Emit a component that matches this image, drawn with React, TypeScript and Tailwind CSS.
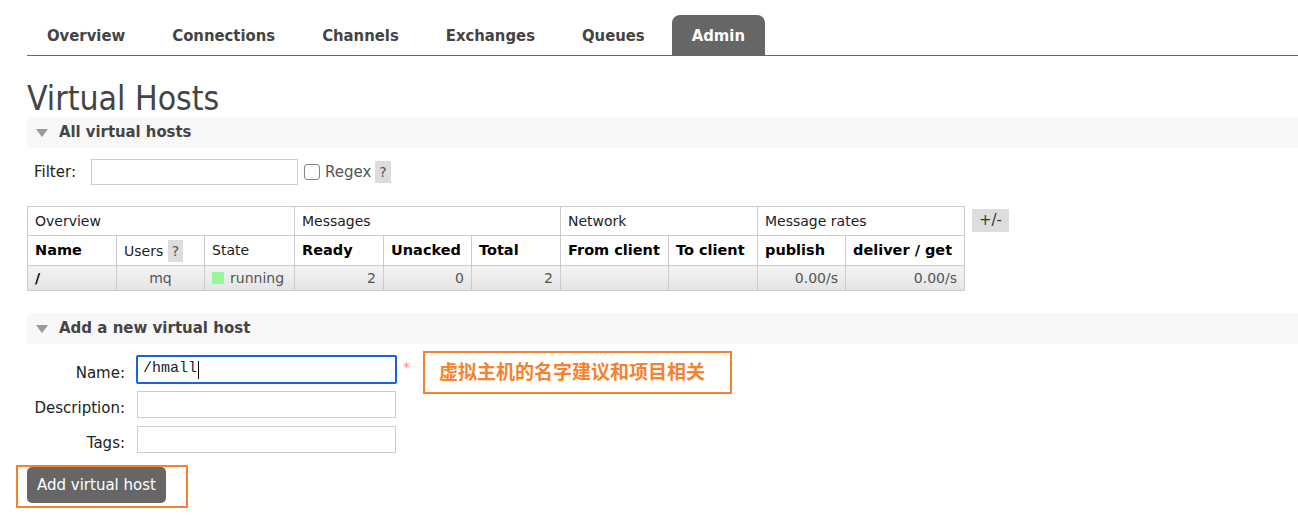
import React from "react";

const tabs = ["Overview", "Connections", "Channels", "Exchanges", "Queues", "Admin"];

const cond = { fontFamily: '"DejaVu Sans Condensed", "DejaVu Sans", sans-serif' };

function SectionHeader({ title, condensed }: { title: string; condensed?: boolean }) {
  return (
    <div className="flex h-[31px] items-center bg-[#f8f8f8] pl-[9px]">
      <svg width="12" height="8" viewBox="0 0 12 8" className="mr-[11px]">
        <path d="M0 0 L12 0 L6 8 Z" fill="#999" />
      </svg>
      {condensed ? (
        <span className="text-[16.5px] font-bold text-[#444]" style={cond}>
          {title}
        </span>
      ) : (
        <span className="text-[15px] font-bold text-[#444]">{title}</span>
      )}
    </div>
  );
}

function Help() {
  return <span className="inline-block bg-[#ddd] px-[4px] leading-[22px] text-[#555]">?</span>;
}

export default function App() {
  const th = "border border-[#ccc] px-[7px] text-left text-[14.5px] font-bold text-black";
  const td = "border border-[#ccc] px-[7px] text-right text-[#555]";
  const thn = "border border-[#ccc] px-[7px] text-left font-normal text-[#222]";
  return (
    <div
      className="min-h-screen bg-white pl-[27px] text-[14px] text-[#222]"
      style={{ fontFamily: '"DejaVu Sans", Verdana, sans-serif' }}
    >
      {/* tabs */}
      <div className="flex gap-[7px] border-b border-[#666] pt-[15px]">
        {tabs.map((t) => (
          <div
            key={t}
            className={`flex h-[40px] items-center rounded-t-[8px] px-[20px] pt-[3px] text-[16.5px] font-bold ${
              t === "Admin" ? "bg-[#666] text-white" : "text-[#444]"
            }`}
            style={cond}
          >
            {t}
          </div>
        ))}
      </div>

      <h1 className="mt-[25px] text-[33.5px] leading-[36px] text-[#444]" style={cond}>
        Virtual Hosts
      </h1>

      <SectionHeader title="All virtual hosts" condensed />

      {/* filter */}
      <div className="mt-[11px] flex items-center pl-[7px] text-[15px]">
        <span className="mr-[15px]">Filter:</span>
        <input className="h-[26px] w-[207px] border border-[#ccc] outline-none" />
        <span className="ml-[6px] inline-block h-[16px] w-[16px] rounded-[3px] border border-[#888]" />
        <span className="ml-[5px] text-[#555]">Regex</span>
        <span className="ml-[4px] text-[14px]">
          <Help />
        </span>
      </div>

      {/* table */}
      <div className="mt-[21px] flex items-start">
        <table className="table-fixed border-collapse text-[14px]">
          <colgroup>
            <col className="w-[89px]" />
            <col className="w-[88px]" />
            <col className="w-[90px]" />
            <col className="w-[89px]" />
            <col className="w-[88px]" />
            <col className="w-[89px]" />
            <col className="w-[108px]" />
            <col className="w-[89px]" />
            <col className="w-[88px]" />
            <col className="w-[119px]" />
          </colgroup>
          <thead>
            <tr className="h-[29px]">
              <th colSpan={3} className={thn}>
                Overview
              </th>
              <th colSpan={3} className={thn}>
                Messages
              </th>
              <th colSpan={2} className={thn}>
                Network
              </th>
              <th colSpan={2} className={thn}>
                Message rates
              </th>
            </tr>
            <tr className="h-[30px]">
              <th className={th}>Name</th>
              <th className={thn}>
                Users <Help />
              </th>
              <th className={thn}>State</th>
              <th className={th}>Ready</th>
              <th className={th}>Unacked</th>
              <th className={th}>Total</th>
              <th className={`${th} whitespace-nowrap px-[6px]`}>From client</th>
              <th className={`${th} whitespace-nowrap px-[6px]`}>To client</th>
              <th className={th}>publish</th>
              <th className={`${th} whitespace-nowrap`}>deliver / get</th>
            </tr>
          </thead>
          <tbody>
            <tr className="h-[25px] bg-gradient-to-b from-[#f4f4f4] to-[#e4e4e4]">
              <td className="border border-[#ccc] px-[7px] text-left font-bold text-black">/</td>
              <td className="border border-[#ccc] px-[7px] text-center text-[#555]">mq</td>
              <td className="border border-[#ccc] px-[7px] text-left text-[#555]">
                <span className="mr-[6px] inline-block h-[12px] w-[12px] bg-[#98f898] align-[-1px]" />
                running
              </td>
              <td className={td}>2</td>
              <td className={td}>0</td>
              <td className={td}>2</td>
              <td className={td}></td>
              <td className={td}></td>
              <td className={td}>0.00/s</td>
              <td className={td}>0.00/s</td>
            </tr>
          </tbody>
        </table>
        <span className="ml-[7px] mt-[3px] bg-[#ddd] px-[7px] text-[15px] leading-[23px] text-[#333]">+/-</span>
      </div>

      <div className="mt-[22px]">
        <SectionHeader title="Add a new virtual host" />
      </div>

      {/* form */}
      <div className="mt-[11px] grid grid-cols-[98px_auto] items-center gap-x-[11px] gap-y-[7px] text-[15px]">
        <span className="translate-y-[4px] text-right">Name:</span>
        <div className="relative flex items-center">
          <div
            className="flex h-[29px] w-[261px] items-center rounded-[2px] border-2 border-[#1a62d6] pl-[5px] text-[15px] text-[#222]"
            style={{ fontFamily: '"Liberation Mono", monospace' }}
          >
            /hmall<span className="ml-[1px] inline-block h-[18px] w-[1px] bg-black" />
          </div>
          <span className="ml-[6px] self-start pt-[2px] text-[14px] text-[#f88]">*</span>
          {/* annotation */}
          <div
            className="absolute left-[287px] top-[-4px] flex h-[43px] w-[309px] items-center border-2 border-[#f5822e] pb-[3px] pl-[14px] text-[19px] font-bold text-[#f5822e]"
            style={{ fontFamily: '"Noto Sans CJK SC", sans-serif' }}
          >
            虚拟主机的名字建议和项目相关
          </div>
        </div>
        <span className="translate-y-[4px] text-right">Description:</span>
        <input className="ml-[1px] h-[27px] w-[259px] border border-[#ccc] outline-none" />
        <span className="mt-[1px] translate-y-[4px] text-right">Tags:</span>
        <input className="ml-[1px] mt-[1px] h-[27px] w-[259px] border border-[#ccc] outline-none" />
      </div>

      <div className="relative mt-[14px] inline-block">
        <button className="h-[36px] rounded-[5px] bg-[#666] px-[10px] text-[15px] text-white">
          Add virtual host
        </button>
        <div className="pointer-events-none absolute -left-[11px] -top-[2px] h-[43px] w-[172px] border-2 border-[#f5822e]" />
      </div>
    </div>
  );
}
